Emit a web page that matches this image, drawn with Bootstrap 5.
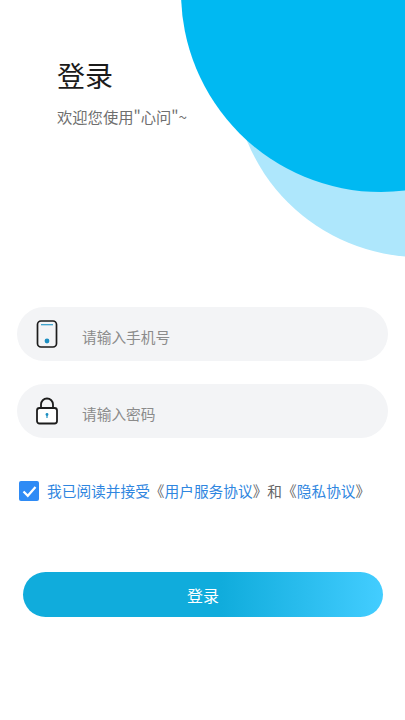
<!DOCTYPE html>
<html lang="zh">
<head>
<meta charset="utf-8">
<link href="https://cdn.jsdelivr.net/npm/bootstrap@5.3.0/dist/css/bootstrap.min.css" rel="stylesheet">
<style>
html,body{height:100%}
body{font-family:"Noto Sans CJK SC","Liberation Sans",sans-serif;background:#fff;overflow:hidden}
.screen{position:relative;width:405px;height:720px;overflow:hidden}
.blob-light{position:absolute;left:233px;top:-117px;width:374px;height:374px;border-radius:50%;background:#aee7fc}
.blob-dark{position:absolute;left:181px;top:-208px;width:400px;height:400px;border-radius:50%;background:#00b9f2}
.head{position:relative;padding:56px 0 0 57px}
.title-text{font-size:28px;line-height:38px;color:#1b1b1b;font-weight:400;margin:0}
.sub-text{font-size:15.3px;line-height:22px;color:#6f6f6f;margin:11px 0 0}
.form-area{position:relative;padding:0 17px;margin-top:180px}
.pill{height:54px;border-radius:27px;background:#f3f4f6;padding-left:19px}
.pill+.pill{margin-top:23px}
.pill svg{flex:none}
.pill .form-control{background:transparent;border:0;box-shadow:none;padding:6px 0 0;margin-left:24px;font-size:14.7px;color:#555;border-radius:0}
.pill .form-control::placeholder{color:#8b8b8b;opacity:1}
.agree{position:relative;margin-top:42px;padding-left:19px;font-size:14.7px;line-height:22px;color:#666;white-space:nowrap}
.agree-box{width:20px;height:20px;border-radius:2px;background:#2f8bf5;flex:none;margin-right:8px}
.agree a{color:#2f86e0;text-decoration:none}
.submit{position:relative;display:block;width:360px;height:45px;margin:70px 0 0 23px;border:0;border-radius:23px;color:#fff;font-size:16px;background:linear-gradient(90deg,#10acdc 0%,#10acdc 55%,#43cdff 100%)}
</style>
</head>
<body>
<div class="screen">
  <div class="blob-light"></div>
  <div class="blob-dark"></div>
  <div class="head">
    <h1 class="title-text">登录</h1>
    <p class="sub-text">欢迎您使用"心问"~</p>
  </div>
  <div class="form-area">
    <div class="pill d-flex align-items-center">
      <svg width="22" height="28" viewBox="0 0 22 28"><rect x="1.5" y="1" width="19" height="26" rx="3.5" fill="#f3f4f6" stroke="#1c1c1c" stroke-width="1.7"/><path d="M5 4.7h12" stroke="#2d9bc9" stroke-width="1.2"/><circle cx="11" cy="21" r="2.4" fill="#1d8fc2"/></svg>
      <input class="form-control" type="text" placeholder="请输入手机号">
    </div>
    <div class="pill d-flex align-items-center">
      <svg width="22" height="28" viewBox="0 0 22 28"><path d="M5 11V7.5a6 6 0 0 1 12 0V11" fill="none" stroke="#1c1c1c" stroke-width="1.8"/><rect x="1" y="11" width="20" height="15.5" rx="2.5" fill="#fff" stroke="#1c1c1c" stroke-width="1.8"/><circle cx="11" cy="17.5" r="1.4" fill="#1d8fc2"/><path d="M11 18v3" stroke="#1d8fc2" stroke-width="1.2"/></svg>
      <input class="form-control" type="password" placeholder="请输入密码">
    </div>
  </div>
  <div class="agree d-flex align-items-center">
    <span class="agree-box d-flex align-items-center justify-content-center">
      <svg width="15" height="13" viewBox="0 0 15 13"><path d="M1.5 6.5l4.3 4.3L13.5 2" fill="none" stroke="#fff" stroke-width="2.2"/></svg>
    </span>
    <span><a href="#">我已阅读并接受</a>《<a href="#">用户服务协议</a>》和《<a href="#">隐私协议</a>》</span>
  </div>
  <button class="submit btn" type="button">登录</button>
</div>
</body>
</html>
